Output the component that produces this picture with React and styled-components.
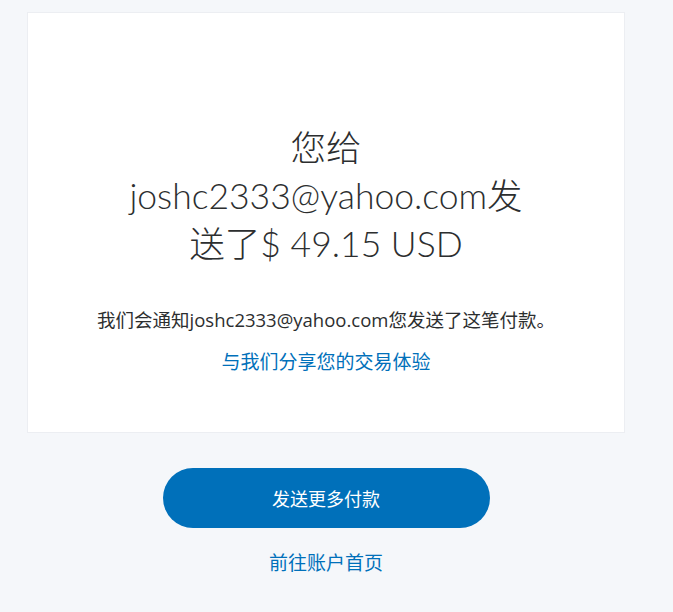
import React from 'react'
import styled, { createGlobalStyle } from 'styled-components'

const Global = createGlobalStyle`
  html, body {
    margin: 0;
    padding: 0;
    background: #f5f7fa;
  }
  body {
    font-family: "Open Sans", "Noto Sans CJK SC", sans-serif;
    color: #2c2e2f;
  }
`

const Page = styled.div`
  width: 652px;
  padding-top: 12px;
  display: flex;
  flex-direction: column;
  align-items: center;
`

const Card = styled.section`
  box-sizing: border-box;
  width: 598px;
  height: 421px;
  background: #fff;
  border: 1px solid #eceef2;
  padding: 111px 20px 0;
  display: flex;
  flex-direction: column;
  align-items: center;
  text-align: center;
`

const Heading = styled.h1`
  margin: 0;
  max-width: 420px;
  font-family: "Lato", "Noto Sans CJK SC", sans-serif;
  font-size: 35.5px;
  line-height: 48px;
  font-weight: 300;
  color: #2c2e2f;
`

const Note = styled.p`
  margin: 40px 0 0;
  font-size: 18.5px;
  line-height: 24px;
  color: #2c2e2f;
`

const Link = styled.a`
  display: block;
  margin-top: ${p => p.$top || 18}px;
  font-size: 19px;
  line-height: 24px;
  color: #0070ba;
  text-decoration: none;
  cursor: pointer;
`

const Button = styled.button`
  margin-top: 35px;
  width: 327px;
  height: 60px;
  border: none;
  border-radius: 30px;
  background: #0070ba;
  color: #fff;
  font-family: inherit;
  font-size: 18px;
  cursor: pointer;
`

export default function App() {
  return (
    <>
      <Global />
      <Page>
        <Card>
          <Heading>您给joshc2333@yahoo.com发送了$ 49.15 USD</Heading>
          <Note>我们会通知joshc2333@yahoo.com您发送了这笔付款。</Note>
          <Link>与我们分享您的交易体验</Link>
        </Card>
        <Button>发送更多付款</Button>
        <Link $top={23}>前往账户首页</Link>
      </Page>
    </>
  )
}
